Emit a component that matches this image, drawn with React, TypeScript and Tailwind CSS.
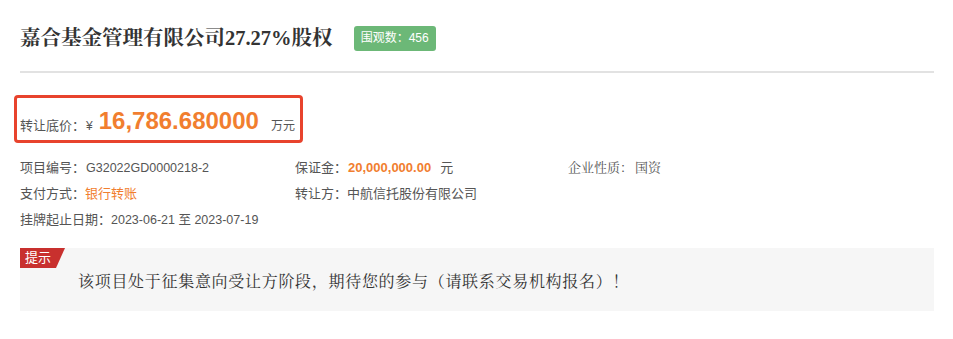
import React from "react";

const sans = "font-['Liberation_Sans','Noto_Sans_CJK_SC',sans-serif]";
const serif = "font-['Liberation_Serif','Noto_Serif_CJK_SC','Noto_Sans_CJK_SC',serif]";

function Field({ label, children }: { label: string; children: React.ReactNode }) {
  return (
    <div className="flex items-center text-[13px] text-[#555] whitespace-nowrap">
      <span>{label}</span>
      {children}
    </div>
  );
}

export default function App() {
  return (
    <div className={`w-[953px] h-[339px] bg-white ${sans}`}>
      <div className="pl-[20px] pr-[19px] pt-[24px]">
        <div className="flex items-center h-[28px]">
          <h1 className={`text-[20.5px] font-bold text-[#333] leading-none whitespace-nowrap ${serif}`}>
            嘉合基金管理有限公司27.27%股权
          </h1>
          <span className="ml-[21px] h-[25px] px-[7px] flex items-center rounded-[3px] bg-[#6cb877] text-white text-[12px] whitespace-nowrap">
            围观数：456
          </span>
        </div>

        <div className="mt-[19px] h-[2px] bg-[#e2e2e2]" />

        <div className="mt-[22px] -ml-[6px] w-[289px] h-[48px] border-[3px] border-[#e8432d] rounded-[4px] flex items-end pb-[7px] pl-[3px] whitespace-nowrap">
          <span className="text-[13px] text-[#555] leading-none mb-[1px]">转让底价：</span>
          <span className="ml-[1px] text-[12px] text-[#555] leading-none mb-[1px]">¥</span>
          <span className="ml-[6px] text-[24px] font-bold text-[#f17e2f] leading-none">16,786.680000</span>
          <span className="ml-[12px] text-[12px] text-[#555] leading-none mb-[1px]">万元</span>
        </div>

        <div className="mt-[12px] flex flex-col">
          <div className="flex h-[26px] items-center">
            <div className="w-[275px]">
              <Field label="项目编号：">
                <span className="ml-[1px] text-[12.5px]">G32022GD0000218-2</span>
              </Field>
            </div>
            <div className="w-[273px]">
              <Field label="保证金：">
                <span className="ml-[1px] font-bold text-[#f17e2f]">20,000,000.00</span>
                <span className="ml-[9px]">元</span>
              </Field>
            </div>
            <div className={serif}>
              <Field label="企业性质：">
                <span className="ml-[2px]">国资</span>
              </Field>
            </div>
          </div>
          <div className="flex h-[26px] items-center">
            <div className="w-[275px]">
              <Field label="支付方式：">
                <span className="text-[#f17e2f]">银行转账</span>
              </Field>
            </div>
            <div>
              <Field label="转让方：">
                <span>中航信托股份有限公司</span>
              </Field>
            </div>
          </div>
          <div className="flex h-[26px] items-center">
            <Field label="挂牌起止日期：">
              <span className="text-[12.5px]">2023-06-21 至 2023-07-19</span>
            </Field>
          </div>
        </div>

        <div className="mt-[15px] h-[63px] bg-[#f6f6f6] relative">
          <span className="absolute left-0 top-0 h-[20px] w-[45px] bg-[#c8302e] text-white text-[13px] leading-[20px] pl-[5px] [clip-path:polygon(0_0,100%_0,80%_100%,0_100%)]">
            提示
          </span>
          <div className={`pl-[58px] pt-[22px] text-[16px] text-[#333] whitespace-nowrap tracking-[0.7px] ${serif}`}>
            该项目处于征集意向受让方阶段，期待您的参与（请联系交易机构报名）！
          </div>
        </div>
      </div>
    </div>
  );
}
